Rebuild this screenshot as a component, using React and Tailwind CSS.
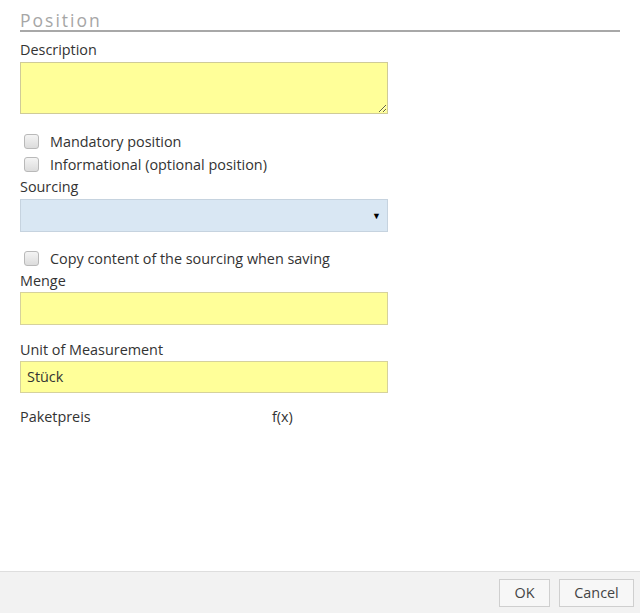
import React from "react";

function Box({ label }) {
  return (
    <div className="flex items-center h-[23px]">
      <span className="ml-1 w-[15px] h-[15px] rounded-[3px] border border-[#b9b9b9] bg-gradient-to-b from-[#f4f4f4] to-[#dcdcdc]" />
      <span className="ml-[11px] text-[14.4px] text-[#333]">{label}</span>
    </div>
  );
}

export default function App() {
  return (
    <div className="flex flex-col h-[613px] bg-white font-['Open_Sans',sans-serif] text-[14.4px] text-[#333]">
      <div className="flex-1 px-5">
        <div className="pt-[10px] border-b-2 border-[#a8a8a8] h-[32px] text-[17.5px] leading-[20px] tracking-[2px] text-[#a6a6a6]">
          Position
        </div>
        <div className="mt-[8px] leading-[20px]">Description</div>
        <textarea className="mt-[2px] block w-[368px] h-[52px] bg-[#ffff99] border border-[#cfcb98] outline-none resize" />
        <div className="mt-[16px]">
          <Box label="Mandatory position" />
          <Box label="Informational (optional position)" />
        </div>
        <div className="leading-[20px] mt-[1px]">Sourcing</div>
        <div className="mt-[2px] w-[368px] h-[33px] bg-[#d9e7f3] border border-[#c6d3df] flex items-center justify-end pr-[6px] text-[9px] text-black">
          ▼
        </div>
        <div className="mt-[15px]">
          <Box label="Copy content of the sourcing when saving" />
        </div>
        <div className="leading-[20px] mt-[1px]">Menge</div>
        <div className="mt-[1px] w-[368px] h-[33px] bg-[#ffff99] border border-[#d6d29c]" />
        <div className="mt-[15px] leading-[20px]">Unit of Measurement</div>
        <div className="mt-[1px] w-[368px] h-[32px] bg-[#ffff99] border border-[#d6d29c] flex items-center px-[6px]">
          Stück
        </div>
        <div className="mt-[14px] flex leading-[20px]">
          <span className="w-[252px]">Paketpreis</span>
          <span>f(x)</span>
        </div>
      </div>
      <div className="h-[42px] bg-[#f2f2f2] border-t border-[#dedede] flex items-center justify-end gap-[9px] pr-[6px]">
        <button className="w-[51px] h-[28px] bg-[#f7f7f7] border border-[#cfcfcf] text-[#444]">OK</button>
        <button className="w-[75px] h-[28px] bg-[#f7f7f7] border border-[#cfcfcf] text-[#444]">Cancel</button>
      </div>
    </div>
  );
}
